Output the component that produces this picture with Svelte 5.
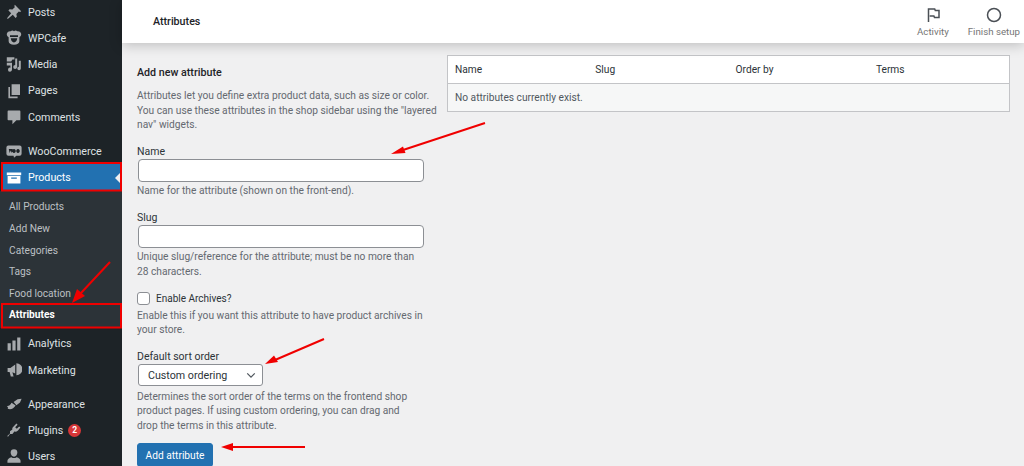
<script>
	const top = [
		{ label: 'Posts', icon: 'M11 1l8 8-1.500 1-1.500-.5-3 3 .5 3.500-1.500 1.500-3.500-4L2.500 18.500l-1 0 0-1L6.500 11.500 3 8l1.500-1.500 3.500.5 3-3-.5-1.500z', h: 26 },
		{ label: 'WPCafe', icon: 'M6 1.500c1-1 2.800-1 4 0 1.200-1 3-1 4 0 2.700-.5 5.500 1.500 5 4.500-.3 1.500-1.200 2.500-2.300 3v5c0 2.500-2.700 4.500-6.700 4.500s-6.700-2-6.700-4.500V9C2.200 8.500 1.300 7.500 1 6 .5 3 3.300 1 6 1.500zM5 6.500v2.200h10V6.500zm1 3.800c.3 3 1.800 5.200 4 5.200s3.700-2.200 4-5.200z', h: 26 },
		{ label: 'Media', icon: 'M1 1.500h9.500v3H8L6.500 7H1zM11.500 3H14v10.500a2.500 2.500 0 1 1-2.500-2.400zM16 6h2.500v9.500a2.200 2.200 0 1 1-2.500-2.200zM1 8.500h6.500v8.500a2.500 2.500 0 1 1-2-2.400V12H1z', h: 26 },
		{ label: 'Pages', icon: 'M7 1.500h10.500V15H7zM5 5v12h9.500v2H3V5z', h: 27 },
		{ label: 'Comments', icon: 'M3 2h14a1 1 0 0 1 1 1v10a1 1 0 0 1-1 1h-4l-5 5v-5H3a1 1 0 0 1-1-1V3a1 1 0 0 1 1-1z', h: 26, gap: 8 }
	];
	const bottom = [
		{ label: 'Analytics', icon: 'M2 9h4v9H2zM8 5.500h4V18H8zM14 2h4v16h-4z', h: 27 },
		{ label: 'Marketing', icon: 'M13 1.500a7.500 7.500 0 0 1 0 15v-15zM11.500 3v11.500L8 12.800 9.500 18H6l-1.500-5.500H2V7.500h3.500z', h: 26, gap: 8 },
		{ label: 'Appearance', icon: 'M9.500 7.500l5-3.500 5-.5-2 4.500-4.500 3.500zM1 12.500c2.500.5 4-1 6-4l5 3.500c-2.500 4-6 5.500-10 4 1-.8.500-2.500-1-3.500z', h: 26 },
		{ label: 'Plugins', badge: '2', icon: 'M13 2l1.500 1.500-3 3 2 2 3-3L18 7l-3 3.500c-1.500 1.500-3 2-4.500 1.500L8 15H5l-2.500 3.500-1-1L5 14.500v-3L8 9.500c-.5-1.500 0-3 1.500-4z', h: 26 },
		{ label: 'Users', icon: 'M10 1.500a4.200 4.200 0 0 1 4.200 4.200c0 2.600-1.900 5.300-4.200 5.300S5.800 8.300 5.800 5.700A4.200 4.200 0 0 1 10 1.500zM6.800 11.500c2 1.500 4.400 1.500 6.400 0 3 .8 5 2.500 5 4.500v2.500H1.800V16c0-2 2-3.700 5-4.500z', h: 26 }
	];
	const sub = ['All Products', 'Add New', 'Categories', 'Tags', 'Food location'];
	const columns = ['Name', 'Slug', 'Order by', 'Terms'];
</script>

{#snippet item(entry)}
	<a class="item" style="height:{entry.h}px;margin-bottom:{entry.gap || 0}px">
		<svg class="icon" viewBox="0 0 20 20"><path d={entry.icon} /></svg>
		<span>{entry.label}</span>
		{#if entry.badge}<b class="badge">{entry.badge}</b>{/if}
	</a>
{/snippet}

<div class="page">
	<aside class="sidebar">
		{#each top as entry}
			{@render item(entry)}
		{/each}

		<a class="item woo">
			<svg class="icon" viewBox="0 0 20 20"><path fill-rule="evenodd" d="M3 3h14a2.500 2.500 0 0 1 2.500 2.500v8A2.500 2.500 0 0 1 17 16h-4l-3 2.500-.5-2.500H3A2.500 2.500 0 0 1 .5 13.500v-8A2.500 2.500 0 0 1 3 3zM3.500 7.500l1 5 1.500-3 1.200 3 1.300-5zm6.500 0a2.200 2.500 0 1 0 .01 0zm5 0a2.200 2.500 0 1 0 .01 0z" /></svg>
			<span>WooCommerce</span>
		</a>
		<a class="item current">
			<svg class="icon" viewBox="0 0 20 20"><path d="M1 3h18v3.500H1zM2 7.500h16V17H2zM6.500 9.500V11h7V9.500z" fill-rule="evenodd" /></svg>
			<span>Products</span>
		</a>

		<div class="submenu">
			{#each sub as name}
				<a>{name}</a>
			{/each}
			<a class="active">Attributes</a>
		</div>

		{#each bottom as entry}
			{@render item(entry)}
		{/each}
	</aside>

	<main class="main">
		<header class="topbar">
			<h1>Attributes</h1>
			<div class="actions">
				<div class="action activity">
					<svg viewBox="0 0 16 16"><path d="M3.500 15V2h6.200l.6 1.500h3.700v7H9.500l-.6-1.500H4.700" /></svg>
					<span>Activity</span>
				</div>
				<div class="action">
					<svg viewBox="0 0 16 16"><circle cx="8" cy="8" r="6.500" /></svg>
					<span>Finish setup</span>
				</div>
			</div>
		</header>

		<div class="content">
			<form class="form">
				<h2>Add new attribute</h2>
				<p class="help intro">Attributes let you define extra product data, such as size or color. You can use these attributes in the shop sidebar using the "layered nav" widgets.</p>

				<label for="attr-name">Name</label>
				<input id="attr-name" type="text" />
				<p class="help">Name for the attribute (shown on the front-end).</p>

				<label class="spaced slug" for="attr-slug">Slug</label>
				<input id="attr-slug" type="text" />
				<p class="help">Unique slug/reference for the attribute; must be no more than 28 characters.</p>

				<div class="check">
					<input id="attr-archive" type="checkbox" />
					<label for="attr-archive">Enable Archives?</label>
				</div>
				<p class="help">Enable this if you want this attribute to have product archives in your store.</p>

				<label class="spaced" for="attr-order">Default sort order</label>
				<div class="select" id="attr-order">
					<span>Custom ordering</span>
					<svg viewBox="0 0 12 8"><path d="M1.500 1.500L6 6l4.500-4.500" /></svg>
				</div>
				<p class="help sort-help">Determines the sort order of the terms on the frontend shop product pages. If using custom ordering, you can drag and drop the terms in this attribute.</p>

				<button type="button">Add attribute</button>
			</form>

			<div class="table">
				<div class="row head">
					{#each columns as column}
						<span>{column}</span>
					{/each}
				</div>
				<div class="row empty">No attributes currently exist.</div>
			</div>
		</div>
	</main>

	<svg class="marks" viewBox="0 0 1024 466">
		<rect x="2" y="163" width="119" height="27.500" />
		<rect x="2" y="304" width="119" height="23.500" />
		<path d="M485 123L400 151M110 262L81 293M324 339L275 360M305 447L232 447" />
		<polygon points="391,154 403,146.500 405.500,153" />
		<polygon points="72,303 77,289 85,296" />
		<polygon points="265,364 274,355.500 278,362" />
		<polygon points="221,447 233,443 233,451" />
	</svg>
</div>

<style>
	:global(body) {
		margin: 0;
		background: #f0f0f1;
	}

	.page {
		position: relative;
		display: flex;
		width: 1024px;
		height: 466px;
		overflow: hidden;
		font-family: Roboto, 'Noto Sans', sans-serif;
		font-size: 10.700px;
		color: #3c434a;
		background: #f0f0f1;
	}

	.sidebar {
		flex: none;
		width: 122px;
		height: 467px;
		margin-top: -1px;
		background: #1d2327;
		color: #dfe1e3;
	}

	.item {
		display: flex;
		align-items: center;
		gap: 6px;
		box-sizing: border-box;
		padding-left: 6px;
		height: 26px;
		position: relative;
	}

	.icon {
		flex: none;
		width: 16px;
		height: 16px;
		fill: #a7aaad;
	}

	.woo {
		height: 26px;
	}

	.current {
		height: 27px;
		margin: 0 2px 0 3px;
		padding-left: 3px;
		background: #2271b1;
		color: #fff;
	}

	.current .icon {
		fill: #fff;
	}

	.current::after {
		content: '';
		position: absolute;
		right: 0;
		top: 9px;
		border: 5px solid transparent;
		border-left: 0;
		border-right-color: #f0f0f1;
	}

	.submenu {
		display: flex;
		flex-direction: column;
		height: 137px;
		box-sizing: border-box;
		padding-top: 5.400px;
		background: #2c3338;
		margin-bottom: 2px;
	}

	.submenu a {
		height: 21.600px;
		line-height: 21.600px;
		padding-left: 9px;
		font-size: 10.200px;
		color: #bcc0c4;
	}

	.submenu .active {
		color: #fff;
		font-weight: 700;
	}

	.badge {
		display: inline-block;
		width: 13px;
		height: 13px;
		margin-left: -1px;
		border-radius: 50%;
		background: #d63638;
		color: #fff;
		font-size: 8.500px;
		line-height: 13px;
		text-align: center;
	}

	.main {
		flex: 1;
		min-width: 0;
	}

	.topbar {
		display: flex;
		align-items: center;
		justify-content: space-between;
		height: 43px;
		background: #fff;
		box-shadow: 0 2px 12px rgba(0, 0, 0, 0.22);
		position: relative;
	}

	h1 {
		margin: 0 0 0 31px;
		font-size: 10.700px;
		font-weight: 500;
		color: #1d2327;
	}

	.actions {
		display: flex;
		margin-right: 4px;
		gap: 19px;
	}

	.action {
		display: flex;
		flex-direction: column;
		align-items: center;
		gap: 3px;
		font-size: 9.700px;
		color: #757575;
	}

	.action svg {
		width: 16px;
		height: 16px;
		fill: none;
		stroke: #4a4f55;
		stroke-width: 1.500;
	}

	.content {
		display: flex;
		align-items: flex-start;
		padding: 12px 14px 0 15px;
		gap: 10px;
	}

	.form {
		flex: none;
		width: 300px;
	}

	h2 {
		margin: 10px 0 8px;
		font-size: 10.700px;
		font-weight: 500;
		line-height: 16px;
		color: #1d2327;
	}

	.help {
		width: 286.500px;
		margin: 2px 0 0;
		font-size: 10.200px;
		line-height: 14.700px;
		color: #646970;
	}

	.intro {
		width: 300px;
		margin-bottom: 10.400px;
	}

	.sort-help {
		width: 280px;
	}

	label {
		display: block;
		font-size: 10.500px;
		line-height: 15px;
		color: #2c3338;
	}

	.spaced {
		margin-top: 11px;
	}

	.slug {
		margin-top: 12px;
	}

	input[type='text'] {
		display: block;
		box-sizing: border-box;
		width: 286px;
		height: 23px;
		margin: 0 0 0 1px;
		border: 1px solid #8c8f94;
		border-radius: 4px;
		background: #fff;
	}

	.check {
		display: flex;
		align-items: center;
		gap: 6px;
		margin: 11px 0 0;
		height: 16px;
	}

	.check label {
		font-size: 10px;
	}

	.check input {
		box-sizing: border-box;
		appearance: none;
		width: 13px;
		height: 13px;
		margin: 0;
		border: 1px solid #8c8f94;
		border-radius: 3px;
		background: #fff;
	}

	.select {
		display: flex;
		align-items: center;
		justify-content: space-between;
		box-sizing: border-box;
		width: 125px;
		height: 22px;
		margin: 0 0 3.500px 1px;
		padding: 0 6px 0 9px;
		border: 1px solid #8c8f94;
		border-radius: 3px;
		background: #fff;
		color: #2c3338;
	}

	.select svg {
		width: 10px;
		height: 7px;
		fill: none;
		stroke: #50575e;
		stroke-width: 1.500;
	}

	button {
		display: block;
		width: 76px;
		height: 24px;
		margin-top: 9.400px;
		padding: 0;
		border: 1px solid #2271b1;
		border-radius: 3px;
		background: #2271b1;
		color: #fff;
		font: inherit;
		font-size: 10.200px;
	}

	.table {
		flex: 1;
		min-width: 0;
		border: 1px solid #c3c4c7;
		background: #fff;
	}

	.row {
		box-sizing: border-box;
		height: 27.500px;
		padding-left: 7px;
		line-height: 28px;
		font-size: 10.200px;
		color: #50575e;
	}

	.head {
		display: grid;
		grid-template-columns: repeat(4, 140.300px);
		border-bottom: 1px solid #c3c4c7;
		color: #2c3338;
	}

	.empty {
		background: #f6f7f7;
	}

	.marks {
		position: absolute;
		inset: 0;
		width: 1024px;
		height: 466px;
		pointer-events: none;
	}

	.marks rect {
		fill: none;
		stroke: #f00000;
		stroke-width: 2;
	}

	.marks path {
		fill: none;
		stroke: #f00000;
		stroke-width: 2;
	}

	.marks polygon {
		fill: #f00000;
	}
</style>
